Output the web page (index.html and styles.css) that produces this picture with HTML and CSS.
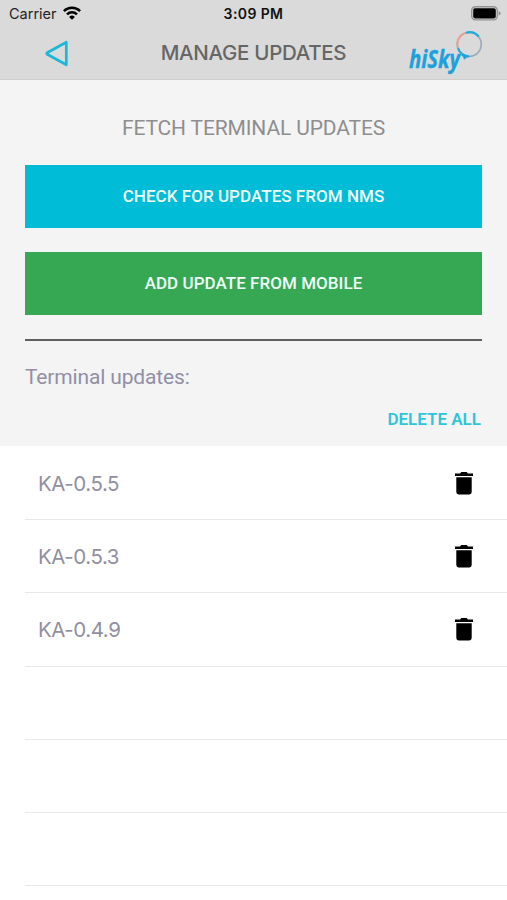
FILE: index.html
```html
<!DOCTYPE html>
<html lang="en">
<head>
<meta charset="utf-8">
<title>Manage Updates</title>
<link rel="stylesheet" href="styles.css">
</head>
<body>
<header class="top">
  <div class="status">
    <div class="carrier"><span class="carrier-name">Carrier</span>
      <svg class="wifi" width="18" height="14" viewBox="0 0 18 14" fill="none" stroke="#000" stroke-width="2.5"><path d="M.9 5.2a11.5 11.5 0 0 1 16.2 0M4 8.3a7.1 7.1 0 0 1 10 0"/><path d="M9 13.8l-2.9-2.9a4.1 4.1 0 0 1 5.8 0z" fill="#000" stroke="none"/></svg>
    </div>
    <time class="clock">3:09 PM</time>
    <svg class="battery" width="30" height="15" viewBox="0 0 30 15"><rect x=".7" y=".7" width="25.6" height="13.2" rx="3.8" fill="#dadada" stroke="#929292" stroke-width="1.4"/><rect x="2.2" y="2.2" width="22.6" height="10.2" rx="1.8"/><path d="M27.6 5q2 .7 2 2.3t-2 2.3z" fill="#929292"/></svg>
  </div>
  <nav class="nav">
    <svg class="back" width="24" height="28" viewBox="0 0 24 28" fill="none" stroke="#1bb9d6" stroke-width="2.7" stroke-linejoin="round"><path d="M21.3 2.2V24.8L2.1 14.2Q1.4 13.5 2.1 12.8Z"/></svg>
    <h1 class="title">MANAGE UPDATES</h1>
    <svg class="logo" width="76" height="46" viewBox="0 0 76 46">
      <text class="logo-text" x="1" y="38" textLength="51" lengthAdjust="spacingAndGlyphs">hiSky</text>
      <circle cx="61.3" cy="14.3" r="12" fill="none" stroke="#9cabbc" stroke-width="1.7"/>
      <path d="M49.6 17a12 12 0 0 1 7.2-13.8" fill="none" stroke="#eda08c" stroke-width="1.8"/>
      <path d="M58 2.8a12 12 0 0 1 12.7 3.7M50 18.2a12 12 0 0 0 11 8.1" fill="none" stroke="#24aada" stroke-width="2.2"/>
      <path d="M52.5 24.5l10 2-3.5 1-3 2.2-.8-2.7z" fill="#1ba2dc"/>
    </svg>
  </nav>
</header>
<main>
  <section class="controls">
    <h2 class="heading">FETCH TERMINAL UPDATES</h2>
    <button class="button check">CHECK FOR UPDATES FROM NMS</button>
    <button class="button add">ADD UPDATE FROM MOBILE</button>
    <hr class="rule">
    <p class="label">Terminal updates:</p>
    <button class="delete-all">DELETE ALL</button>
  </section>
  <ul class="list">
    <li class="row"><span class="version">KA-0.5.5</span><svg class="trash" width="18" height="23" viewBox="0 0 18 23"><path d="M0 1.5h5L6.3 0h5.4L13 1.5h5V4H0zM1.3 5.2h15.4v14.9a2.4 2.4 0 0 1-2.4 2.4H3.7a2.4 2.4 0 0 1-2.4-2.4z"/></svg></li>
    <li class="row"><span class="version">KA-0.5.3</span><svg class="trash" width="18" height="23" viewBox="0 0 18 23"><path d="M0 1.5h5L6.3 0h5.4L13 1.5h5V4H0zM1.3 5.2h15.4v14.9a2.4 2.4 0 0 1-2.4 2.4H3.7a2.4 2.4 0 0 1-2.4-2.4z"/></svg></li>
    <li class="row"><span class="version">KA-0.4.9</span><svg class="trash" width="18" height="23" viewBox="0 0 18 23"><path d="M0 1.5h5L6.3 0h5.4L13 1.5h5V4H0zM1.3 5.2h15.4v14.9a2.4 2.4 0 0 1-2.4 2.4H3.7a2.4 2.4 0 0 1-2.4-2.4z"/></svg></li>
    <li class="row"></li>
    <li class="row"></li>
    <li class="row"></li>
  </ul>
</main>
</body>
</html>
```
FILE: styles.css
```css
* { box-sizing: border-box; }
body { margin: 0; height: 900px; overflow: hidden; background: #fff; font-family: Roboto, sans-serif; }
h1, h2, p, ul { margin: 0; padding: 0; font-weight: 400; }
button { border: 0; padding: 0; font-family: inherit; }
.top { height: 80px; background: #dadada; border-bottom: 1px solid #cfcfcf; font-family: Inter, sans-serif; }
.status { height: 28px; display: grid; grid-template-columns: 1fr auto 1fr; align-items: center; padding: 0 6px; }
.carrier { display: flex; align-items: center; gap: 6px; padding-left: 3px; }
.carrier-name { font-size: 14.5px; margin-top: -1px; color: #222; }
.wifi { margin-top: -3px; }
.clock { font-size: 14px; font-weight: 600; letter-spacing: .4px; margin-top: -1px; color: #111; }
.battery { justify-self: end; margin-top: -2px; }
.nav { height: 51px; display: grid; grid-template-columns: 1fr auto 1fr; align-items: center; padding: 0 23px; }
.back { margin-left: 22px; }
.title { font-size: 20.5px; font-weight: 550; letter-spacing: -.3px; color: #666; line-height: 26px; white-space: nowrap; margin-top: -2px; }
.logo { justify-self: end; margin-top: -2px; }
.logo-text { font: italic 700 25px "Open Sans", sans-serif; fill: #1ba2dc; stroke: #1ba2dc; stroke-width: .4px; }
.controls { height: 366px; background: #f4f4f4; padding: 33px 25px 0; display: flex; flex-direction: column; }
.heading { font-size: 21px; letter-spacing: -.13px; line-height: 30px; height: 30px; text-align: center; color: #8e8e8e; }
.button { height: 63px; padding-bottom: 2px; font-size: 17px; font-weight: 500; letter-spacing: .04px; color: #f0fff9; flex: none; }
.check { margin-top: 22px; background: #00bcd7; }
.add { margin-top: 24px; background: #36a853; }
.rule { width: 100%; height: 2px; margin: 24px 0 0; border: 0; background: #5e5e5e; }
.label { margin-top: 23px; font-size: 21px; letter-spacing: -.15px; line-height: 26px; color: #918fa5; }
.delete-all { align-self: flex-end; margin: 18px 1px 0 0; background: none; color: #2dc5db; font-size: 17px; font-weight: 600; line-height: 22px; }
.list { list-style: none; padding-left: 25px; }
.row { height: 73.3px; border-bottom: 1px solid #e8e8e8; display: flex; align-items: center; justify-content: space-between; padding: 1px 34px 0 13px; }
.row:first-child { height: 74px; }
.version { font: 400 20.5px Inter, sans-serif; letter-spacing: -.45px; color: #918fa0; }
```
